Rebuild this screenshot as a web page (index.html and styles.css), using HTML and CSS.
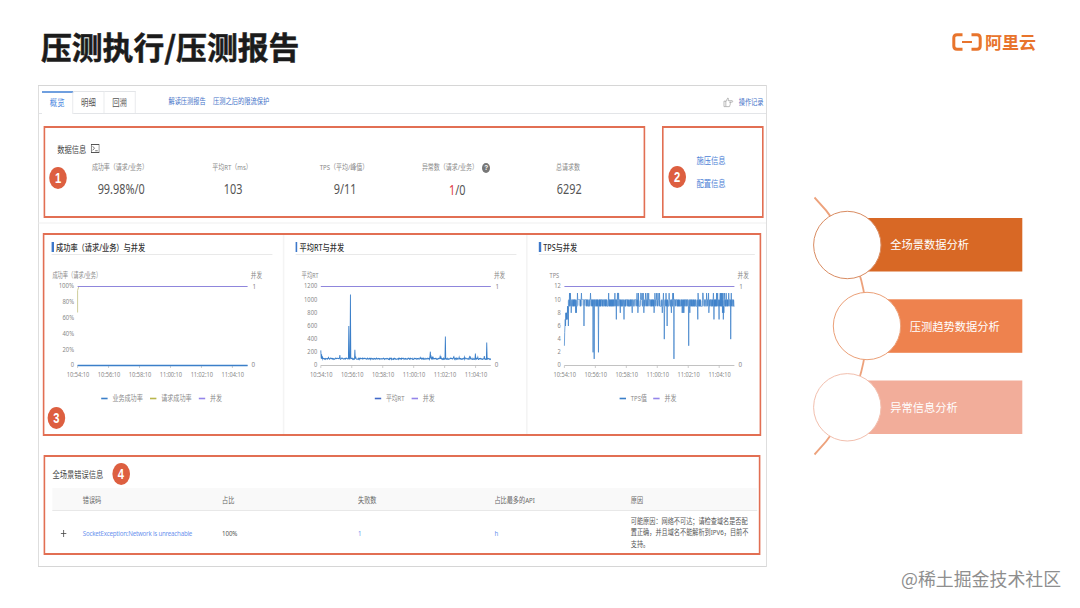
FILE: index.html
```html
<!DOCTYPE html>
<html lang="zh-CN">
<head>
<meta charset="utf-8">
<title>压测执行/压测报告</title>
<link rel="stylesheet" href="styles.css">
</head>
<body>
<div class="slide">
  <header class="head">
    <h1 class="title">压测执行/压测报告</h1>
    <div class="brand">
      <svg class="brand-mark" viewBox="0 0 30 18" width="30" height="18">
        <g fill="none" stroke="#e8742c" stroke-width="3">
          <path d="M10.5 1.8H5Q1.8 1.8 1.8 5V13Q1.8 16.2 5 16.2H10.5"/>
          <path d="M19.5 1.8H25Q28.2 1.8 28.2 5V13Q28.2 16.2 25 16.2H19.5"/>
          <path d="M10 9H20" stroke-width="2"/>
        </g>
      </svg>
      <span>阿里云</span>
    </div>
  </header>

  <main class="content">
    <div class="report-slot">
      <section class="report">
        <nav class="tabs">
          <span class="tab tab-on">概览</span><span class="tab">明细</span><span class="tab">回溯</span>
          <a class="nav-link first-link">解读压测报告</a><a class="nav-link">压测之后的限流保护</a>
          <a class="nav-link log-link">
            <svg viewBox="0 0 14 12" width="14" height="11"><path d="M1 4.5H3.5V10.5H1ZM3.5 5 6 1.2Q7.3 1 7 2.5L6.6 4H12.3Q13.3 4.8 12.3 5.6H8.5M8.5 5.6H9.6Q10.3 6.5 9.4 7.4Q9.8 8.2 9 9Q9.2 10.5 8 10.5H3.5" fill="none" stroke="#999" stroke-width=".8"/></svg>
            操作记录</a>
        </nav>

        <div class="summary">
          <div class="frame stats-frame">
            <span class="badge badge-1">1</span>
            <h2 class="stats-title">数据信息
              <svg viewBox="0 0 12 10" width="11" height="9"><rect x=".5" y=".5" width="11" height="9" fill="none" stroke="#444"/><path d="M2.5 2.5 5 4.7 2.5 7M6 7.5H9.5" fill="none" stroke="#444" stroke-width=".9"/></svg>
            </h2>
            <div class="stats">
              <div class="stat"><div class="stat-label">成功率（请求/业务）</div><div class="stat-value">99.98%/0</div></div>
              <div class="stat"><div class="stat-label">平均RT（ms）</div><div class="stat-value">103</div></div>
              <div class="stat"><div class="stat-label">TPS（平均/峰值）</div><div class="stat-value">9/11</div></div>
              <div class="stat"><div class="stat-label">异常数（请求/业务）<i class="help">?</i></div><div class="stat-value stat-error"><em>1</em>/0</div></div>
              <div class="stat"><div class="stat-label">总请求数</div><div class="stat-value">6292</div></div>
            </div>
          </div>
          <div class="frame info-frame">
            <span class="badge badge-2">2</span>
            <a>施压信息</a>
            <a>配置信息</a>
          </div>
        </div>

        <div class="frame charts-frame">
          <span class="badge badge-3">3</span>
          <div class="card"><h3>成功率（请求/业务）与并发</h3><svg class="chart" id="chart-rate"></svg></div>
          <div class="card"><h3>平均RT与并发</h3><svg class="chart" id="chart-rt"></svg></div>
          <div class="card"><h3>TPS与并发</h3><svg class="chart" id="chart-tps"></svg></div>
        </div>

        <div class="frame errors-frame">
          <h2 class="errors-title">全场景错误信息<span class="badge">4</span></h2>
          <div class="row row-head"><span></span><span>错误码</span><span>占比</span><span>失败数</span><span>占比最多的API</span><span>原因</span></div>
          <div class="row row-body">
            <span><svg class="plus" viewBox="0 0 8 8" width="8" height="7"><path d="M4 0V8M0 4H8" stroke="#444" fill="none"/></svg></span>
            <a class="code">SocketException:Network is unreachable</a><span class="pct">100%</span><a>1</a><a>h</a>
            <span class="reason">可能原因：网络不可达；请检查域名是否配<br>置正确，并且域名不能解析到IPV6，目前不<br>支持。</span>
          </div>
        </div>
      </section>
    </div>

    <svg class="points" viewBox="0 0 220 270" width="220" height="270">
      <path d="M4.5 7.5A183.5 183.5 0 0 1 4.5 264.5" fill="none" stroke="#eda27c" stroke-width="1.8"/>
      <rect x="37" y="28" width="175.300" height="53.500" fill="#d86825"/>
      <rect x="57" y="109.300" width="155.300" height="53.500" fill="#ee824e"/>
      <rect x="37" y="190.500" width="175.300" height="53.500" fill="#f2ad9a"/>
      <circle cx="37.300" cy="55" r="33.700" fill="#fff" stroke="#d98c62"/>
      <circle cx="57" cy="136" r="33.700" fill="#fff" stroke="#eba078"/>
      <circle cx="37.300" cy="217.300" r="33.700" fill="#fff" stroke="#f2bfae"/>
      <text x="80.300" y="59.300">全场景数据分析</text>
      <text x="99.700" y="140.500">压测趋势数据分析</text>
      <text x="80.300" y="221.600">异常信息分析</text>
    </svg>
  </main>
  <div class="watermark">@稀土掘金技术社区</div>
</div>
<script src="charts.js"></script>
</body>
</html>
```

FILE: styles.css
```css
* { box-sizing: border-box; }
body { margin: 0; background: #fff; font-family: "Noto Sans", "Noto Sans CJK SC", sans-serif; }
h1, h2, h3 { margin: 0; font-weight: 400; }
.slide { position: relative; width: 1080px; height: 608px; overflow: hidden; }

.head { display: flex; justify-content: space-between; height: 85px; padding: 23px 44px 0 41px; }
.title { font: 700 30.8px/46px "Noto Sans CJK SC", sans-serif; color: #1b1b1b; white-space: nowrap; -webkit-text-stroke: .5px #1b1b1b; }
.brand { display: flex; gap: 3px; height: 34px; margin-top: 2px; align-items: center; color: #e8742c; font: 700 17px/34px "Noto Sans CJK SC", sans-serif; }

.content { display: flex; padding-left: 38px; }
.report-slot { width: 772px; height: 482px; flex: none; }
/* The report is laid out at full width and condensed horizontally. */
.report { width: 911px; height: 482px; border: 1px solid #d6d6d6; transform: scaleX(.8); transform-origin: 0 0; color: #555; }
.report a { color: #4c7fd6; white-space: nowrap; }

.tabs { display: flex; height: 28px; padding: 5px 4px 0; border-bottom: 1px solid #e3e5e8; font-size: 9.2px; line-height: 22px; }
.tab { width: 39px; height: 22px; text-align: center; border: 1px solid #e3e5e8; border-left: 0; border-bottom: 0; color: #555; }
.tab-on { height: 23px; border-top: 2px solid #6f9fdf; line-height: 20px; background: #fff; color: #4c8ae0; }
.report .nav-link { font-size: 7.8px; line-height: 20px; color: #3f71c8; margin-right: 9px; }
.report .first-link { margin-left: 41px; }
.report .log-link { display: flex; align-items: center; gap: 6px; margin-left: auto; margin-right: -1px; }

.frame { position: relative; border: 2px solid #e26f53; }
.badge { width: 22px; height: 22px; border-radius: 50%; background: #dd5f40; color: #fff; font: 700 14px/22px "Liberation Sans", sans-serif; text-align: center; }
.badge-1, .badge-2, .badge-3 { position: absolute; }
.badge-1 { left: 5px; top: 39px; }
.badge-2 { left: 6px; top: 38px; }
.badge-3 { left: 4px; top: 172px; }

.summary { display: flex; gap: 21px; height: 110px; padding: 12px 3px 6px 6px; border-bottom: 2px solid #f7f7f7; }
.stats-frame { width: 752px; height: 92px; padding: 12px 0 0 15px; }
.stats-title { display: flex; align-items: center; gap: 6px; height: 17px; font-size: 9.1px; color: #444; }
.stats-title svg { margin-top: -1px; }
.stats { display: flex; margin-left: 10px; }
.stat { width: 140px; text-align: center; }
.stat-label { display: flex; justify-content: center; align-items: center; height: 15px; margin-top: 2px; margin-left: -3px; font-size: 7.5px; color: #888; white-space: nowrap; }
.help { width: 10px; height: 10px; margin: 2px 0 0 5px; border-radius: 50%; background: #777; color: #fff; font: 700 8px/10px "Liberation Sans", sans-serif; }
.stat-value { padding-top: 1px; font-size: 13.6px; line-height: 27px; color: #555; }
.stat-error { padding-top: 2px; }
.stat-value em { font-style: normal; color: #e0393e; }
.info-frame { width: 127px; height: 92px; padding: 21px 0 0 41px; display: flex; flex-direction: column; font-size: 9.1px; line-height: 23px; }

.charts-frame { display: flex; width: 898px; height: 203px; margin: 9px 0 0 5px; padding-left: 9px; }
.card { position: relative; width: 304.500px; flex: none; padding-top: 5px; }
.card:last-child { width: 272px; }
/* Divider in the gutter before each following card. */
.card + .card::before { content: ""; position: absolute; left: -16px; top: 0; width: 2px; height: 199px; background: #f4f4f4; }
.card h3 { width: 276px; height: 15px; border-bottom: 1px solid #e9e9e9; font-size: 9px; line-height: 15px; font-weight: 500; color: #333; white-space: nowrap; }
.card h3::before { content: ""; display: inline-block; width: 2.500px; height: 10px; margin-right: 3px; vertical-align: -1px; background: #3d78ca; }
.card:last-child h3 { width: 270px; }
.chart { display: block; width: 280px; height: 165px; margin-top: -2px; overflow: visible; font-size: 7.8px; }
.chart text { fill: #888; }

.errors-frame { width: 896px; height: 100px; margin: 19px 0 0 6px; padding: 4px 2px 0 9px; }
.errors-title { display: flex; align-items: center; gap: 11px; height: 25px; font-size: 9.1px; color: #444; }
.row { display: grid; grid-template-columns: 38px 174px 170px 170.500px 170.500px 1fr; align-items: center; font-size: 7.7px; white-space: nowrap; }
.row-head { height: 23px; margin-top: 2px; background: #f9f9f9; border-bottom: 1px solid #e8e8e8; color: #666; }
.row-body { height: 44px; }
.row-body a { color: #6c93ee; }
.plus { display: block; margin-left: 10px; }
.row-body .code { letter-spacing: -.26px; }
.pct { letter-spacing: -.1px; }
.reason { line-height: 11.4px; }

.points { flex: none; margin-top: 105px; font-size: 11.25px; }
.points text { fill: #fff; font-family: "Noto Sans CJK SC", sans-serif; }
.watermark { position: absolute; left: 901px; top: 565px; font: 400 17.9px/26px "Noto Sans CJK SC", sans-serif; color: #8e8e8e; white-space: nowrap; }
```

FILE: charts.js
```js
const TOP = 33.5, HEIGHT = 79, WIDTH = 212.5;
const PURPLE = '#8f86dc', BLUE = '#3b7fc9';

function text(x, y, value, anchor, width) {
  const fit = width ? ` textLength="${width}" lengthAdjust="spacingAndGlyphs"` : '';
  return `<text x="${x}" y="${y}" text-anchor="${anchor}"${fit}>${value}</text>`;
}

function hline(x, y, w, color, size) {
  return `<path d="M${x} ${y}h${w}" stroke="${color}" stroke-width="${size}" fill="none"/>`;
}

function random(seed) {
  return () => (seed = (seed * 16807) % 2147483647) / 2147483647;
}

function draw(id, o) {
  const x0 = o.left, bottom = TOP + HEIGHT;
  let s = text(o.nameX, 25, o.name, 'start', o.nameW) + text(x0 + WIDTH + 18, 25, '并发', 'end', 14);
  o.ticks.forEach((t, i) => {
    s += text(x0 - 4.5, bottom - HEIGHT * i / (o.ticks.length - 1) + 2, t, 'end', String(t).length * (String(t).includes('%') ? 4.8 : 4.1));
  });
  s += text(x0 + WIDTH + 6, TOP + 2.5, '1', 'start') + text(x0 + WIDTH + 5, bottom + 2, '0', 'start');
  s += hline(x0, bottom, WIDTH, '#bbb', 1);
  ['10:54:10', '10:56:10', '10:58:10', '11:00:10', '11:02:10', '11:04:10'].forEach((t, i) => {
    const x = x0 + i * 38.7;
    s += `<path d="M${x} ${bottom}v2.500" stroke="#bbb" stroke-width=".8"/>` + text(x + .5, bottom + 12, t, 'middle', 28);
  });
  s += o.series(x0, bottom) + hline(x0, TOP, WIDTH, PURPLE, 1.2);
  o.legend.forEach(([x, color, label, w]) => {
    s += hline(x, 145.5, 8, color, 1.6) + text(x + 14, 148.5, label, 'start', w);
  });
  document.getElementById(id).innerHTML = s;
}

function polyline(values, x0, bottom, max, size) {
  const points = values.map((v, i) => `${(x0 + WIDTH * i / (values.length - 1)).toFixed(2)},${(bottom - HEIGHT * v / max).toFixed(2)}`);
  return `<polyline points="${points.join(' ')}" fill="none" stroke="${BLUE}" stroke-width="${size}"/>`;
}

draw('chart-rate', {
  left: 32.5, nameX: 1, nameW: 61, name: '成功率（请求/业务）',
  ticks: ['0', '20%', '40%', '60%', '80%', '100%'],
  series: (x, b) => hline(x, b, WIDTH, BLUE, 1.4) + `<path d="M${x} ${TOP + 26}V${TOP + 4}L${x + 1.5} ${TOP}" stroke="#c8c78e" fill="none" stroke-width="1"/>`,
  legend: [[62, BLUE, '业务成功率', 38], [123, '#b9b64c', '请求成功率', 38], [184, '#9585ea', '并发', 15]]
});

draw('chart-rt', {
  left: 31.5, nameX: 7.500, nameW: 21, name: '平均RT', ticks: [0, 200, 400, 600, 800, 1000, 1200],
  series: (x, b) => {
    const r = random(71), n = 420, v = [];
    for (let i = 0; i < n; i++) v.push(92 + r() * 20 + (r() > .93 ? r() * 45 : 0));
    const spikes = [[0, 230], [.004, 170], [.01, 140], [.165, 600], [.175, 1080], [.2, 240], [.112, 160], [.645, 210], [.732, 440], [.91, 180], [.975, 350]];
    spikes.forEach(([p, y]) => { v[Math.round(p * (n - 1))] = y; });
    return polyline(v, x, b, 1200, 1.1);
  },
  legend: [[99, '#4169c8', '平均RT', 23], [145, '#9585ea', '并发', 15]]
});

draw('chart-tps', {
  left: 32, nameX: 13.500, nameW: 12, name: 'TPS', ticks: [0, 2, 4, 6, 8, 10, 12],
  series: (x, b) => {
    // Readings above 10 come in bursts.
    const bursts = [[.02, .04], [.25, .32], [.42, .5], [.54, .62], [.75, .85], [.87, .95]];
    const r = random(923), n = 600, v = [];
    for (let i = 0; i < n; i++) {
      const k = r(), p = i / n;
      const high = bursts.some(([from, to]) => p > from && p < to) ? .84 : .975;
      v.push(k > high ? 11 : k > .45 ? 10 : k > .035 ? 9 : 8);
    }
    const start = [3, 5, 6, 7, 6, 8, 7, 8, 7, 8, 7, 9, 8, 9, 6, 9];
    start.forEach((y, i) => { v[i] = y; });
    const drops = [[.115, 6], [.168, 2], [.176, 1], [.2, 2], [.305, 7], [.35, 7], [.588, 4], [.605, 6], [.645, 1], [.732, 3], [.785, 7], [.88, 7], [.91, 7], [.935, 7], [.978, 4]];
    drops.forEach(([p, y]) => { v[Math.round(p * (n - 1))] = y; });
    return hline(x + 4, b - HEIGHT * 9.5 / 12, WIDTH - 4, 'rgba(59,127,201,.25)', 5) + polyline(v, x, b, 12, .8);
  },
  legend: [[101, BLUE, 'TPS值', 20], [143, '#9585ea', '并发', 15]]
});
```
